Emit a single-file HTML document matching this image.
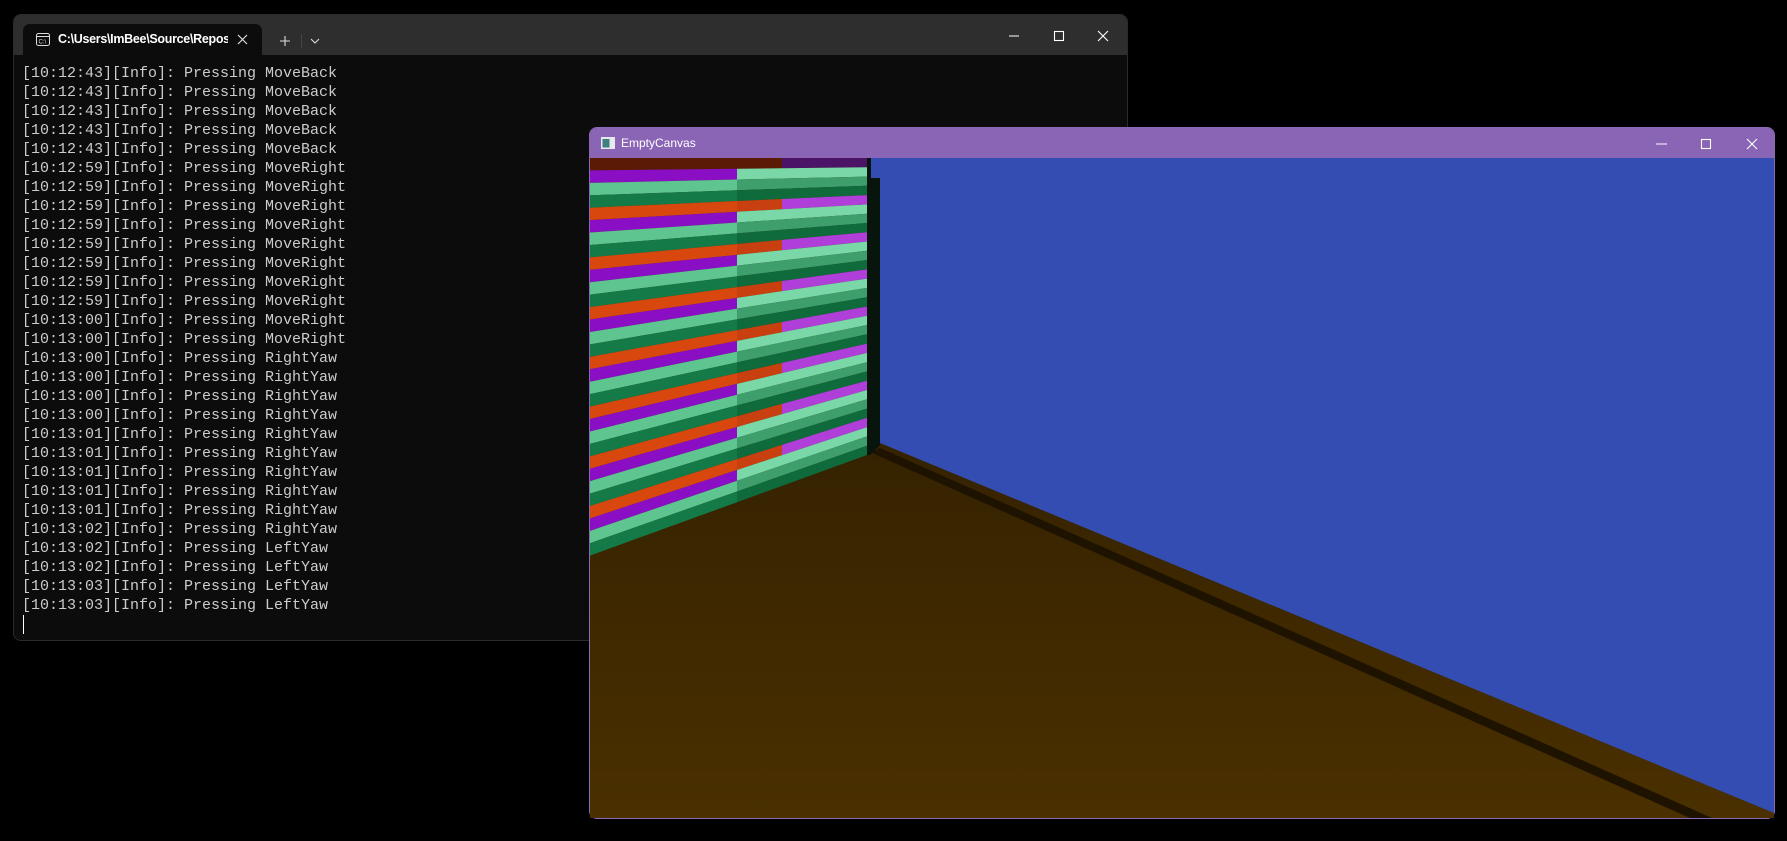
<!DOCTYPE html>
<html><head><meta charset="utf-8"><style>
html,body{margin:0;padding:0;background:#000;width:1787px;height:841px;overflow:hidden;position:relative;font-family:"Liberation Sans",sans-serif}
.term{position:absolute;left:13px;top:14px;width:1115px;height:627px;background:#0c0c0c;border:1px solid #2a2a2a;border-radius:8px;box-sizing:border-box;overflow:hidden}
.tbar{position:absolute;left:0;top:0;right:0;height:40px;background:#2e2e2e}
.tab{position:absolute;left:9px;top:9px;width:239px;height:31px;background:#0c0c0c;border-radius:7px 7px 0 0}
.tabt{position:absolute;left:35px;top:8px;font-size:12.5px;font-weight:bold;color:#fff;white-space:nowrap;width:170px;overflow:hidden;letter-spacing:-0.3px}
.lines{position:absolute;left:8px;top:49px;font-family:"Liberation Mono",monospace;font-size:15px;line-height:19px;color:#cccccc;white-space:pre}
.cv{position:absolute;left:589px;top:127px;width:1186px;height:692px;border:1px solid #8b6ab5;border-radius:8px;box-sizing:border-box;overflow:hidden;background:#3b2700}
.cvbar{position:absolute;left:0;top:0;right:0;height:31px;background:#8a65b5}
</style></head><body>
<div class="term">
 <div class="tbar"></div>
 <div class="tab">
  <svg style="position:absolute;left:13px;top:9px" width="14" height="13"><rect x="0.5" y="0.5" width="13" height="12" rx="2" fill="none" stroke="#ddd"/><line x1="1" y1="3.5" x2="13" y2="3.5" stroke="#ddd"/><text x="2.5" y="10.5" font-size="6" fill="#ddd" font-family="Liberation Sans">C:\</text></svg>
  <div class="tabt">C:\Users\ImBee\Source\Repos</div>
  <svg style="position:absolute;left:214px;top:10px" width="11" height="11"><path d="M1 1L10 10M10 1L1 10" stroke="#ddd" stroke-width="1.2"/></svg>
 </div>
 <svg style="position:absolute;left:265px;top:19px" width="60" height="14"><path d="M1 7H11M6 2V12" stroke="#ddd" stroke-width="1.1"/><line x1="22.5" y1="0" x2="22.5" y2="14" stroke="#444"/><path d="M32 5L36 9L40 5" stroke="#ddd" fill="none" stroke-width="1.1"/></svg>
 <svg style="position:absolute;left:990px;top:14px" width="115" height="14"><path d="M5 7H15" stroke="#fff" stroke-width="1.1"/><rect x="50.5" y="2.5" width="9" height="9" fill="none" stroke="#fff" stroke-width="1.1"/><path d="M94 2L104 12M104 2L94 12" stroke="#fff" stroke-width="1.1"/></svg>
 <div class="lines">[10:12:43][Info]: Pressing MoveBack
[10:12:43][Info]: Pressing MoveBack
[10:12:43][Info]: Pressing MoveBack
[10:12:43][Info]: Pressing MoveBack
[10:12:43][Info]: Pressing MoveBack
[10:12:59][Info]: Pressing MoveRight
[10:12:59][Info]: Pressing MoveRight
[10:12:59][Info]: Pressing MoveRight
[10:12:59][Info]: Pressing MoveRight
[10:12:59][Info]: Pressing MoveRight
[10:12:59][Info]: Pressing MoveRight
[10:12:59][Info]: Pressing MoveRight
[10:12:59][Info]: Pressing MoveRight
[10:13:00][Info]: Pressing MoveRight
[10:13:00][Info]: Pressing MoveRight
[10:13:00][Info]: Pressing RightYaw
[10:13:00][Info]: Pressing RightYaw
[10:13:00][Info]: Pressing RightYaw
[10:13:00][Info]: Pressing RightYaw
[10:13:01][Info]: Pressing RightYaw
[10:13:01][Info]: Pressing RightYaw
[10:13:01][Info]: Pressing RightYaw
[10:13:01][Info]: Pressing RightYaw
[10:13:01][Info]: Pressing RightYaw
[10:13:02][Info]: Pressing RightYaw
[10:13:02][Info]: Pressing LeftYaw
[10:13:02][Info]: Pressing LeftYaw
[10:13:03][Info]: Pressing LeftYaw
[10:13:03][Info]: Pressing LeftYaw</div>
 <div style="position:absolute;left:9px;top:600px;width:1px;height:19px;background:#fff"></div>
</div>

<div class="cv">
 <div class="cvbar"></div>
 <svg style="position:absolute;left:11px;top:9px" width="14" height="12"><rect x="0" y="0" width="14" height="12" fill="#e8e8f0"/><rect x="1.5" y="2" width="7" height="8.5" fill="#3f7f80"/></svg>
 <div style="position:absolute;left:31px;top:8px;font-size:12px;color:#fff">EmptyCanvas</div>
 <svg style="position:absolute;left:1060px;top:8px" width="120" height="16"><path d="M6 8H17" stroke="#fff" stroke-width="1.1"/><rect x="51.5" y="3.5" width="9" height="9" fill="none" stroke="#fff" stroke-width="1.1"/><path d="M97 3L107 13M107 3L97 13" stroke="#fff" stroke-width="1.1"/></svg>
</div>

<svg style="position:absolute;left:0;top:0" width="1787" height="841" viewBox="0 0 1787 841">
 <defs>
  <linearGradient id="fl" x1="0" y1="0" x2="0" y2="1"><stop offset="0" stop-color="#352200"/><stop offset="1" stop-color="#4a3000"/></linearGradient>
  <clipPath id="s1"><rect x="590" y="158" width="147" height="400"/></clipPath>
  <clipPath id="s2"><rect x="737" y="158" width="45" height="400"/></clipPath>
  <clipPath id="s3"><rect x="782" y="158" width="86" height="400"/></clipPath>
  <g id="bands">
   <polygon style="fill:var(--z)" points="589,158 867,158 867,167.3 589,170.4"/>
   <polygon style="fill:var(--b)" points="589,170.4 867,167.3 867,176.6 589,182.9"/>
   <polygon style="fill:var(--c)" points="589,182.9 867,176.6 867,185.8 589,195.3"/>
   <polygon style="fill:var(--d)" points="589,195.3 867,185.8 867,195.1 589,207.8"/>
   <polygon style="fill:var(--a)" points="589,207.8 867,195.1 867,204.4 589,220.2"/>
   <polygon style="fill:var(--b)" points="589,220.2 867,204.4 867,213.7 589,232.6"/>
   <polygon style="fill:var(--c)" points="589,232.6 867,213.7 867,223 589,245.1"/>
   <polygon style="fill:var(--d)" points="589,245.1 867,223 867,232.2 589,257.5"/>
   <polygon style="fill:var(--a)" points="589,257.5 867,232.2 867,241.5 589,270"/>
   <polygon style="fill:var(--b)" points="589,270 867,241.5 867,250.8 589,282.4"/>
   <polygon style="fill:var(--c)" points="589,282.4 867,250.8 867,260.1 589,294.8"/>
   <polygon style="fill:var(--d)" points="589,294.8 867,260.1 867,269.4 589,307.3"/>
   <polygon style="fill:var(--a)" points="589,307.3 867,269.4 867,278.6 589,319.7"/>
   <polygon style="fill:var(--b)" points="589,319.7 867,278.6 867,287.9 589,332.2"/>
   <polygon style="fill:var(--c)" points="589,332.2 867,287.9 867,297.2 589,344.6"/>
   <polygon style="fill:var(--d)" points="589,344.6 867,297.2 867,306.5 589,357"/>
   <polygon style="fill:var(--a)" points="589,357 867,306.5 867,315.8 589,369.5"/>
   <polygon style="fill:var(--b)" points="589,369.5 867,315.8 867,325 589,381.9"/>
   <polygon style="fill:var(--c)" points="589,381.9 867,325 867,334.3 589,394.4"/>
   <polygon style="fill:var(--d)" points="589,394.4 867,334.3 867,343.6 589,406.8"/>
   <polygon style="fill:var(--a)" points="589,406.8 867,343.6 867,352.9 589,419.2"/>
   <polygon style="fill:var(--b)" points="589,419.2 867,352.9 867,362.2 589,431.7"/>
   <polygon style="fill:var(--c)" points="589,431.7 867,362.2 867,371.4 589,444.1"/>
   <polygon style="fill:var(--d)" points="589,444.1 867,371.4 867,380.7 589,456.6"/>
   <polygon style="fill:var(--a)" points="589,456.6 867,380.7 867,390 589,469"/>
   <polygon style="fill:var(--b)" points="589,469 867,390 867,399.3 589,481.4"/>
   <polygon style="fill:var(--c)" points="589,481.4 867,399.3 867,408.6 589,493.9"/>
   <polygon style="fill:var(--d)" points="589,493.9 867,408.6 867,417.8 589,506.3"/>
   <polygon style="fill:var(--a)" points="589,506.3 867,417.8 867,427.1 589,518.8"/>
   <polygon style="fill:var(--b)" points="589,518.8 867,427.1 867,436.4 589,531.2"/>
   <polygon style="fill:var(--c)" points="589,531.2 867,436.4 867,445.7 589,543.6"/>
   <polygon style="fill:var(--d)" points="589,543.6 867,445.7 867,455 589,556"/>
  </g>
 </defs>
 <polygon points="590,556 867,455 880,443 1774,813 1774,818 590,818" fill="url(#fl)"/>
 <polygon points="870,452 880,448 1712,818 1690,818" fill="#1e1200"/>
 <polygon points="871,158 1774,158 1774,813 880,443 880,178 871,178" fill="#334db2"/>
 <polygon points="857,158 871,158 871,178 880,178 880,445 870,455 857,455" fill="#07150d"/>
 <use href="#bands" clip-path="url(#s1)" style="--z:#5a1a06;--a:#d8480e;--b:#8a0fc4;--c:#5ec490;--d:#137a48"/>
 <use href="#bands" clip-path="url(#s2)" style="--z:#5a1a06;--a:#c84010;--b:#7ad8a8;--c:#3e9e6c;--d:#0f6a3c"/>
 <use href="#bands" clip-path="url(#s3)" style="--z:#4c1466;--a:#b03ed8;--b:#7ad8a8;--c:#3e9e6c;--d:#0f6a3c"/>
</svg>
</body></html>
